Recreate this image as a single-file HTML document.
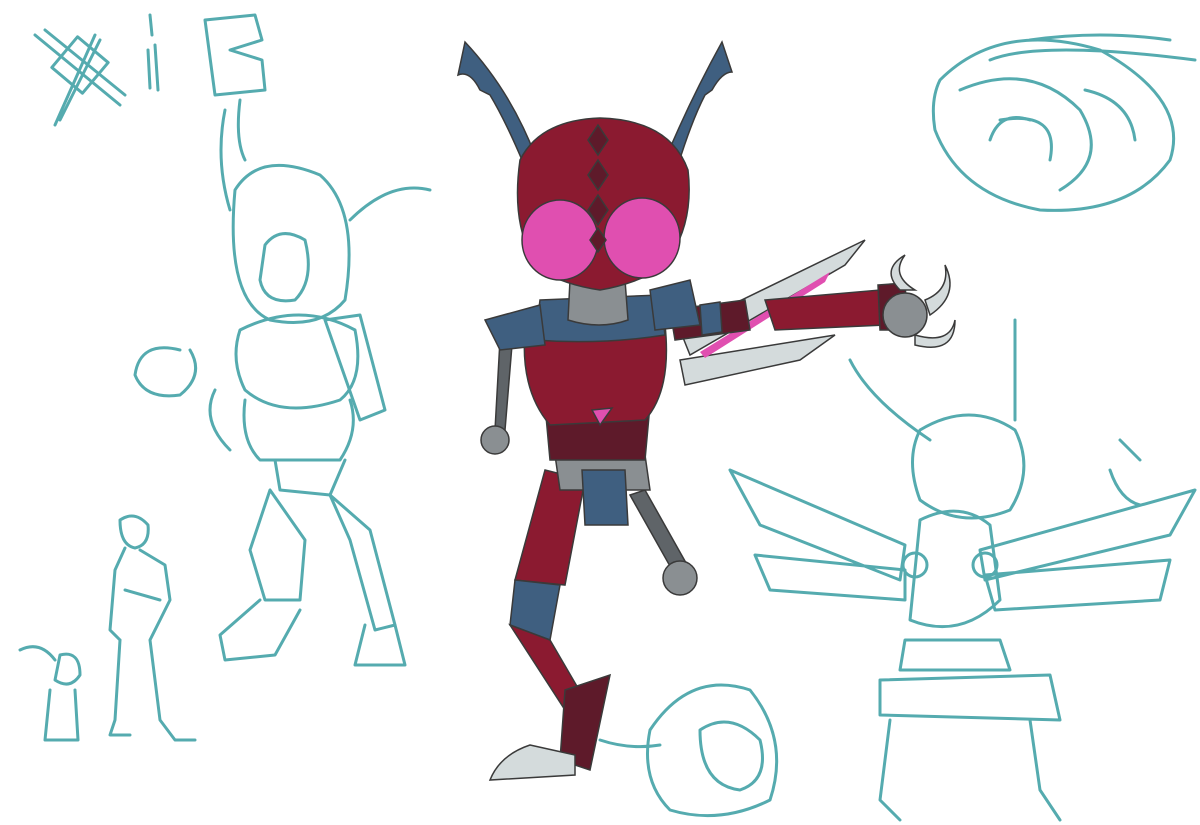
<!DOCTYPE html>
<html><head><meta charset="utf-8"><style>html,body{margin:0;padding:0;background:#fff;width:1200px;height:825px;overflow:hidden}svg{display:block}</style></head>
<body>
<svg width="1200" height="825" viewBox="0 0 1200 825" xmlns="http://www.w3.org/2000/svg">
<rect width="1200" height="825" fill="#fff"/>
<g fill="none" stroke="#55abaf" stroke-width="3" stroke-linecap="round" stroke-linejoin="round">
<path d="M35 35 L120 105 M45 30 L125 95 M95 35 L55 125 M100 40 L60 120"/>
<rect x="60" y="45" width="40" height="40" transform="rotate(40 80 65)"/>
<path d="M150 15 L152 35 M155 45 L158 90 M148 50 L150 88"/>
<path d="M205 20 L255 15 L262 40 L230 50 L262 60 L265 90 L215 95 Z"/>
<path d="M225 110 Q215 160 230 210 M240 100 Q235 140 245 160 M350 220 Q390 180 430 190"/>
<path d="M235 190 Q260 150 320 175 Q360 210 345 300 Q320 330 270 320 Q225 300 235 190 Z"/>
<path d="M265 245 Q280 225 305 240 Q315 280 295 300 Q265 305 260 280 Z"/>
<path d="M240 330 Q230 360 245 390 Q280 420 340 400 Q365 380 355 330 Q300 300 240 330 Z"/>
<path d="M325 320 L360 315 L385 410 L360 420 Z"/>
<path d="M245 400 Q240 440 260 460 L340 460 Q360 430 350 400"/>
<path d="M215 390 Q200 420 230 450 M180 350 Q140 340 135 375 Q145 400 180 395 Q205 375 190 350"/>
<path d="M275 460 L280 490 L330 495 L345 460"/>
<path d="M270 490 L250 550 L265 600 L300 600 L305 540 Z M330 495 L350 540 L375 630 L395 625 L370 530 Z"/>
<path d="M260 600 L220 635 L225 660 L275 655 L300 610 M365 625 L355 665 L405 665 L395 625"/>
<path d="M120 520 Q135 510 148 525 Q150 545 135 548 Q120 545 120 520 Z"/>
<path d="M125 548 L115 570 L110 630 L120 640 M140 550 L165 565 L170 600 L150 640 M120 640 L115 720 L110 735 L130 735 M150 640 L160 720 L175 740 L195 740 M125 590 L160 600"/>
<path d="M20 650 Q40 640 55 660 M60 655 Q80 650 80 675 Q70 690 55 680 Z M50 690 L45 740 L78 740 L75 690"/>
<path d="M940 80 Q1000 20 1100 50 Q1190 100 1170 160 Q1130 215 1040 210 Q960 195 935 130 Q930 100 940 80 Z"/>
<path d="M960 90 Q1030 60 1080 110 Q1110 160 1060 190 M1000 120 Q1060 110 1050 160 M990 60 Q1040 40 1195 60 M1030 40 Q1100 30 1170 40"/>
<path d="M990 140 Q1000 110 1030 120 M1085 90 Q1130 100 1135 140"/>
<path d="M850 360 Q870 400 930 440 M1015 320 L1015 420"/>
<path d="M920 430 Q970 400 1015 430 Q1035 470 1010 510 Q960 530 920 500 Q905 460 920 430 Z"/>
<path d="M730 470 L905 545 L900 580 L760 525 Z M755 555 L905 570 L905 600 L770 590 Z"/>
<path d="M1195 490 L980 550 L985 580 L1170 535 Z M1170 560 L985 575 L995 610 L1160 600 Z"/>
<circle cx="915" cy="565" r="12"/><circle cx="985" cy="565" r="12"/>
<path d="M920 520 Q960 500 990 525 L1000 600 Q960 640 910 620 Z"/>
<path d="M905 640 L1000 640 L1010 670 L900 670 Z M880 680 L1050 675 L1060 720 L880 715 Z"/>
<path d="M890 720 L880 800 L900 820 M1030 720 L1040 790 L1060 820"/>
<path d="M1120 440 L1140 460 M1110 470 Q1120 500 1140 505"/>
<path d="M650 730 Q690 670 750 690 Q790 740 770 800 Q720 825 670 810 Q640 780 650 730 Z"/>
<path d="M700 730 Q730 710 760 740 Q770 780 740 790 Q700 785 700 730 Z"/>
<path d="M600 740 Q630 750 660 745"/>
</g>
<g stroke="#3a3a3a" stroke-width="1.5">
<path d="M680 330 L865 240 L845 265 L690 355 Z" fill="#d4dbdc"/>
<path d="M680 360 L835 335 L800 360 L685 385 Z" fill="#d4dbdc"/>
<path d="M700 352 L830 272 L825 282 L705 358 Z" fill="#e04fb0" stroke="none"/>
<path d="M540 390 L560 460 L575 460 L560 380 Z" fill="#d4dbdc"/>
<path d="M535 155 Q510 90 465 42 L458 75 Q470 70 480 90 L490 95 Q505 120 522 160 Z" fill="#3f5f80"/>
<path d="M665 160 Q690 100 722 42 L732 72 Q722 72 712 90 L705 95 Q692 120 678 165 Z" fill="#3f5f80"/>
<path d="M500 340 L512 345 L505 430 L495 430 Z" fill="#5f6468"/>
<circle cx="495" cy="440" r="14" fill="#8a8f92"/>
<path d="M630 495 L645 490 L690 570 L675 575 Z" fill="#5f6468"/>
<circle cx="680" cy="578" r="17" fill="#8a8f92"/>
<path d="M670 310 L745 300 L750 330 L675 340 Z" fill="#5e1a2a"/>
<path d="M700 305 L720 302 L722 332 L702 335 Z" fill="#3f5f80"/>
<path d="M765 300 L880 290 L885 325 L775 330 Z" fill="#8b1a30"/>
<path d="M878 285 L905 283 L908 330 L880 330 Z" fill="#5e1a2a"/>
<circle cx="905" cy="315" r="22" fill="#8a8f92"/>
<path d="M900 290 Q880 270 905 255 Q890 275 915 290 Z" fill="#d4dbdc"/>
<path d="M925 300 Q950 290 945 265 Q960 295 930 315 Z" fill="#d4dbdc"/>
<path d="M915 335 Q950 345 955 320 Q955 355 915 345 Z" fill="#d4dbdc"/>
<path d="M545 470 L585 480 L565 585 L515 580 Z" fill="#8b1a30"/>
<path d="M515 580 L560 585 L550 640 L510 625 Z" fill="#3f5f80"/>
<path d="M510 625 L550 640 L585 700 L565 710 Z" fill="#8b1a30"/>
<path d="M565 690 L610 675 L590 770 L560 760 Z" fill="#5e1a2a"/>
<path d="M530 745 L575 755 L575 775 L490 780 Q500 755 530 745 Z" fill="#d4dbdc"/>
<path d="M555 455 L645 455 L650 490 L560 490 Z" fill="#8a8f92"/>
<path d="M582 470 L625 470 L628 525 L585 525 Z" fill="#3f5f80"/>
<path d="M545 405 L650 405 L645 460 L550 460 Z" fill="#5e1a2a"/>
<path d="M525 330 L665 325 Q672 390 645 420 L550 425 Q520 390 525 330 Z" fill="#8b1a30"/>
<path d="M592 410 L612 408 L600 425 Z" fill="#e04fb0"/>
<path d="M540 300 L660 295 L665 335 Q600 345 535 340 Z" fill="#3f5f80"/>
<path d="M485 320 L540 305 L545 345 L500 350 Z" fill="#3f5f80"/>
<path d="M650 290 L690 280 L700 325 L655 330 Z" fill="#3f5f80"/>
<path d="M570 280 L625 280 L628 320 Q600 330 568 320 Z" fill="#8a8f92"/>
<path d="M520 160 Q540 120 600 118 Q670 120 688 170 Q695 230 660 270 Q630 285 600 290 Q565 285 540 270 Q510 230 520 160 Z" fill="#8b1a30"/>
<ellipse cx="560" cy="240" rx="38" ry="40" fill="#e04fb0"/>
<ellipse cx="642" cy="238" rx="38" ry="40" fill="#e04fb0"/>
<path d="M598 125 L608 140 L598 155 L588 140 Z M598 160 L608 175 L598 190 L588 175 Z M598 195 L608 210 L598 225 L588 210 Z M598 228 L606 240 L598 252 L590 240 Z" fill="#5e1a2a"/>
</g>
</svg>
</body></html>
